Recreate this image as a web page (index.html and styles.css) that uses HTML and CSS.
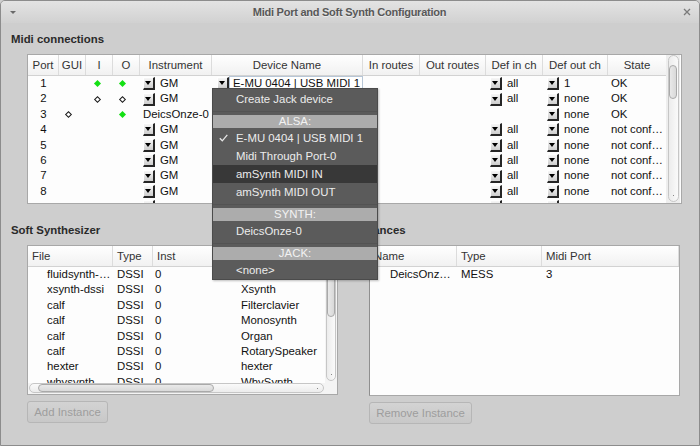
FILE: index.html
```html
<!DOCTYPE html>
<html>
<head>
<meta charset="utf-8">
<title>Midi Port and Soft Synth Configuration</title>
<link rel="stylesheet" href="styles.css">
</head>
<body>
<div class="window">
  <div class="titlebar">
    <span class="tb-menu"></span>
    <span class="tb-title">Midi Port and Soft Synth Configuration</span>
    <svg class="tb-close" width="8" height="8" viewBox="0 0 8 8"><path d="M1 1L7 7M7 1L1 7" stroke="#7a7a7a" stroke-width="1.3" fill="none"/></svg>
  </div>

  <div class="content">
    <div class="group-label">Midi connections</div>
    <div class="frame midi-frame">
      <div class="midi-table">
        <div class="mrow mhead">
          <div>Port</div><div>GUI</div><div>I</div><div>O</div><div>Instrument</div><div>Device Name</div><div>In routes</div><div>Out routes</div><div>Def in ch</div><div>Def out ch</div><div>State</div>
        </div>
        <div class="mrow">
          <div class="num">1</div><div class="ico"></div><div class="ico i"><i class="dg"></i></div><div class="ico"><i class="dg"></i></div>
          <div class="cb first"><i class="arr"></i>GM</div>
          <div class="dev"><i class="arr"></i><span class="edit">E-MU 0404 | USB MIDI 1</span></div>
          <div></div><div></div>
          <div class="cb"><i class="arr"></i>all</div><div class="cb"><i class="arr"></i>1</div><div class="st">OK</div>
        </div>
        <div class="mrow">
          <div class="num">2</div><div class="ico"></div><div class="ico i"><i class="dw"></i></div><div class="ico"><i class="dw"></i></div>
          <div class="cb first"><i class="arr"></i>GM</div>
          <div></div><div></div><div></div>
          <div class="cb"><i class="arr"></i>all</div><div class="cb"><i class="arr"></i>none</div><div class="st">OK</div>
        </div>
        <div class="mrow">
          <div class="num">3</div><div class="ico"><i class="dw"></i></div><div class="ico i"></div><div class="ico"><i class="dg"></i></div>
          <div class="cb first">DeicsOnze-0</div>
          <div></div><div></div><div></div>
          <div></div><div class="cb"><i class="arr"></i>none</div><div class="st">OK</div>
        </div>
        <div class="mrow">
          <div class="num">4</div><div></div><div></div><div></div>
          <div class="cb first"><i class="arr"></i>GM</div>
          <div></div><div></div><div></div>
          <div class="cb"><i class="arr"></i>all</div><div class="cb"><i class="arr"></i>none</div><div class="st">not conf…</div>
        </div>
        <div class="mrow">
          <div class="num">5</div><div></div><div></div><div></div>
          <div class="cb first"><i class="arr"></i>GM</div>
          <div></div><div></div><div></div>
          <div class="cb"><i class="arr"></i>all</div><div class="cb"><i class="arr"></i>none</div><div class="st">not conf…</div>
        </div>
        <div class="mrow">
          <div class="num">6</div><div></div><div></div><div></div>
          <div class="cb first"><i class="arr"></i>GM</div>
          <div></div><div></div><div></div>
          <div class="cb"><i class="arr"></i>all</div><div class="cb"><i class="arr"></i>none</div><div class="st">not conf…</div>
        </div>
        <div class="mrow">
          <div class="num">7</div><div></div><div></div><div></div>
          <div class="cb first"><i class="arr"></i>GM</div>
          <div></div><div></div><div></div>
          <div class="cb"><i class="arr"></i>all</div><div class="cb"><i class="arr"></i>none</div><div class="st">not conf…</div>
        </div>
        <div class="mrow">
          <div class="num">8</div><div></div><div></div><div></div>
          <div class="cb first"><i class="arr"></i>GM</div>
          <div></div><div></div><div></div>
          <div class="cb"><i class="arr"></i>all</div><div class="cb"><i class="arr"></i>none</div><div class="st">not conf…</div>
        </div>
        <div class="mrow">
          <div class="num"></div><div></div><div></div><div></div>
          <div class="cb first"><i class="arr"></i></div>
          <div></div><div></div><div></div>
          <div class="cb"><i class="arr"></i></div><div class="cb"><i class="arr"></i></div><div class="st"></div>
        </div>
      </div>
      <div class="midi-vs"><div class="vtrack"><div class="vthumb"></div><i class="dot"></i></div></div>
    </div>

    <div class="bottom">
      <div class="col">
        <div class="group-label">Soft Synthesizer</div>
        <div class="frame synth-frame">
          <div class="srow shead"><div>File</div><div>Type</div><div>Inst</div><div>Name</div></div>
          <div class="sbody">
            <div class="srows">
              <div class="srow"><div class="file">fluidsynth-…</div><div>DSSI</div><div>0</div><div>FluidSynth</div></div>
              <div class="srow"><div class="file">xsynth-dssi</div><div>DSSI</div><div>0</div><div>Xsynth</div></div>
              <div class="srow"><div class="file">calf</div><div>DSSI</div><div>0</div><div>Filterclavier</div></div>
              <div class="srow"><div class="file">calf</div><div>DSSI</div><div>0</div><div>Monosynth</div></div>
              <div class="srow"><div class="file">calf</div><div>DSSI</div><div>0</div><div>Organ</div></div>
              <div class="srow"><div class="file">calf</div><div>DSSI</div><div>0</div><div>RotarySpeaker</div></div>
              <div class="srow"><div class="file">hexter</div><div>DSSI</div><div>0</div><div>hexter</div></div>
              <div class="srow"><div class="file">whysynth</div><div>DSSI</div><div>0</div><div>WhySynth</div></div>
            </div>
            <div class="synth-vs"><div class="vtrack"><div class="vthumb s"></div><i class="dot"></i></div></div>
          </div>
          <div class="hrow">
            <div class="htrack"><div class="hthumb"></div><i class="hdot"></i></div>
            <div class="corner"></div>
          </div>
        </div>
        <button class="btn add" disabled>Add Instance</button>
      </div>

      <div class="col">
        <div class="group-label">Instances</div>
        <div class="frame inst-frame">
          <div class="irow ihead"><div>Name</div><div>Type</div><div>Midi Port</div></div>
          <div class="irow"><div class="iname">DeicsOnz…</div><div>MESS</div><div>3</div></div>
        </div>
        <button class="btn remove" disabled>Remove Instance</button>
      </div>
    </div>
  </div>

  <div class="popup">
    <div class="mi">Create Jack device</div>
    <div class="msep"></div>
    <div class="mh">ALSA:</div>
    <div class="mi checked"><svg class="check" width="9" height="8" viewBox="0 0 9 8"><path d="M0.8 4.2L3.3 6.8L8.3 0.8" stroke="#e6e6e6" stroke-width="1.3" fill="none"/></svg>E-MU 0404 | USB MIDI 1</div>
    <div class="mi">Midi Through Port-0</div>
    <div class="mi hl">amSynth MIDI IN</div>
    <div class="mi">amSynth MIDI OUT</div>
    <div class="msep"></div>
    <div class="mh">SYNTH:</div>
    <div class="mi">DeicsOnze-0</div>
    <div class="msep"></div>
    <div class="mh">JACK:</div>
    <div class="mi">&lt;none&gt;</div>
  </div>
</div>
</body>
</html>
```

FILE: styles.css
```css
* { box-sizing: border-box; }
html, body { margin: 0; padding: 0; }
body {
  width: 700px;
  height: 446px;
  overflow: hidden;
  background: #cecece;
  font-family: "Liberation Sans", Arial, sans-serif;
  font-size: 11.4px;
  color: #111;
}

.window {
  position: relative;
  width: 700px;
  height: 446px;
  background: #cecece;
  border: 1px solid #8c8c8c;
  border-radius: 5px 5px 0 0;
  overflow: hidden;
}

/* title bar */
.titlebar {
  height: 22px;
  display: flex;
  align-items: center;
  justify-content: space-between;
  padding: 0 8px 0 9px;
  background: linear-gradient(#e3e3e3, #d1d1d1);
}
.tb-menu {
  width: 0; height: 0;
  border-left: 3px solid transparent;
  border-right: 3px solid transparent;
  border-top: 3px solid #6a6a6a;
}
.tb-title {
  font-weight: bold;
  font-size: 11px;
  letter-spacing: -0.25px;
  color: #585858;
  text-shadow: 0 1px 0 rgba(255,255,255,0.5);
}
.tb-close { display: block; }

/* content */
.content {
  padding: 9px 17px 0 10px;
}
.group-label {
  height: 14px;
  line-height: 14px;
  font-weight: bold;
  font-size: 11.4px;
  color: #2a2a2a;
  margin-bottom: 8px;
  white-space: nowrap;
}
.frame {
  margin-left: 16px;
  background: #fdfdfd;
  border: 1px solid #a8a8a8;
  overflow: hidden;
}

/* midi table */
.midi-frame {
  display: flex;
  height: 150px;
}
.midi-table {
  width: 638px;
  flex: none;
  overflow: hidden;
}
.mrow {
  display: grid;
  grid-template-columns: 31px 27px 27px 27px 72px 151px 57px 66px 57px 65px 58px;
  height: 15.4px;
  line-height: 15.4px;
  white-space: nowrap;
}
.mrow > div { overflow: hidden; }
.mhead {
  height: 21px;
  line-height: 20px;
  background: linear-gradient(#ffffff, #f1f1f1);
  border-bottom: 1px solid #d2d2d2;
  color: #333;
}
.mhead > div {
  text-align: center;
  border-right: 1px solid #dcdcdc;
}
.mhead > div:last-child { border-right: none; }
.num { text-align: center; }
.ico {
  display: flex;
  align-items: center;
  padding-left: 7px;
}
.ico.i { padding-left: 9px; }
.dg, .dw {
  display: block;
  width: 5px;
  height: 5px;
  transform: rotate(45deg);
}
.dg { background: #14e014; }
.dw { background: #fff; border: 1px solid #1a1a1a; }

.cb {
  display: flex;
  align-items: center;
  gap: 5px;
  padding-left: 4px;
}
.cb.first { padding-left: 3px; }
.arr {
  position: relative;
  display: block;
  flex: none;
  width: 12px;
  height: 13px;
  background: linear-gradient(#f7f7f7, #cdcdcd);
  border-style: solid;
  border-width: 1px 2px 2px 1px;
  border-color: #ffffff #262626 #262626 #ffffff;
}
.arr::after {
  content: "";
  position: absolute;
  left: 1px;
  top: 3px;
  border-left: 3.5px solid transparent;
  border-right: 3.5px solid transparent;
  border-top: 4px solid #000;
}
.dev {
  display: flex;
  align-items: center;
  padding-left: 5px;
}
.edit {
  flex: 1;
  height: 15px;
  line-height: 13px;
  border: 1px solid #b7c6d6;
  background: #fff;
  padding-left: 3px;
  overflow: hidden;
}
.st {
  padding-left: 3px;
}

.midi-vs {
  width: 14px;
  flex: none;
  background: #eeeeee;
  padding: 0 1px 1px 2px;
}
.vtrack {
  position: relative;
  height: 100%;
  border: 1px solid #c6c6c6;
  border-radius: 6px;
  background: linear-gradient(90deg, #ececec, #fafafa);
}
.vthumb {
  position: absolute;
  left: 0;
  top: 9px;
  width: 8px;
  height: 34px;
  border: 1px solid #a9a9a9;
  border-radius: 4px;
  background: linear-gradient(90deg, #e9e9e9, #d9d9d9);
}
.dot {
  position: absolute;
  left: 4px;
  bottom: 5px;
  width: 1px;
  height: 1px;
  background: #888;
}

/* bottom area */
.bottom {
  display: flex;
  gap: 15px;
  margin-top: 19px;
}
.col { width: 328px; }
.col:first-child { width: 327px; }

.synth-frame {
  width: 311px;
  height: 150px;
  margin-bottom: 1px;
  display: flex;
  flex-direction: column;
}
.srow {
  display: grid;
  grid-template-columns: 85px 40px 84px 1fr;
  height: 15.4px;
  line-height: 15.4px;
  white-space: nowrap;
}
.srow > div { overflow: hidden; padding-left: 4px; }
.srow > div:nth-child(3) { padding-left: 2px; }
.srow > div.file { padding-left: 19px; }
.shead, .ihead {
  height: 21px;
  line-height: 20px;
  flex: none;
  background: linear-gradient(#ffffff, #f1f1f1);
  border-bottom: 1px solid #d2d2d2;
  color: #333;
}
.shead > div, .ihead > div { border-right: 1px solid #dcdcdc; padding-left: 4px; }
.shead > div:nth-child(3) { padding-left: 4px; }
.sbody {
  display: flex;
  flex: 1;
  min-height: 0;
}
.srows {
  width: 297px;
  flex: none;
  overflow: hidden;
}
.synth-vs {
  width: 12px;
  flex: none;
  padding: 0 1px 2px 1px;
  background: #f4f4f4;
}
.vthumb.s { top: 1px; height: 48px; width: 8px; }
.hrow {
  height: 11px;
  flex: none;
  display: flex;
  background: #f4f4f4;
}
.htrack {
  position: relative;
  width: 295px;
  margin-left: 1px;
  height: 10px;
  border: 1px solid #c6c6c6;
  border-radius: 6px;
  background: linear-gradient(#fafafa, #ececec);
}
.hthumb {
  position: absolute;
  left: 8px;
  top: 0;
  width: 176px;
  height: 8px;
  border: 1px solid #a9a9a9;
  border-radius: 4px;
  background: linear-gradient(#e9e9e9, #d9d9d9);
}
.hdot {
  position: absolute;
  right: 5px;
  top: 4px;
  width: 1px;
  height: 1px;
  background: #888;
}
.corner { flex: 1; }

.inst-frame {
  width: 311px;
  height: 151px;
  border-left-color: #8f8f8f;
}
.irow {
  display: grid;
  grid-template-columns: 87px 85px 1fr;
  height: 15.4px;
  line-height: 15.4px;
  white-space: nowrap;
}
.irow > div { overflow: hidden; padding-left: 4px; }
.irow > div.iname { padding-left: 20px; }
.ihead { height: 21px; line-height: 20px; }

.btn {
  display: block;
  margin: 6px 0 0 16px;
  height: 22px;
  padding: 0;
  border: 1px solid #b6b6b6;
  border-radius: 3px;
  background: linear-gradient(#d3d3d3, #c8c8c8);
  color: #9d9d9d;
  font-family: "Liberation Sans", Arial, sans-serif;
  font-size: 11.4px;
  text-align: center;
}
.btn.add { width: 81px; }
.btn.remove { width: 103px; }

/* popup menu */
.popup {
  position: absolute;
  left: 211px;
  top: 87px;
  width: 166px;
  padding-top: 1px;
  background: #5b5b5b;
  border: 1px solid #4b4b4b;
  color: #ececec;
  box-shadow: 1px 1px 2px rgba(0,0,0,0.25);
}
.mi {
  position: relative;
  height: 18px;
  line-height: 18px;
  padding-left: 23px;
  white-space: nowrap;
}
.mi.hl { background: #383838; }
.check {
  position: absolute;
  left: 6px;
  top: 5px;
}
.msep {
  position: relative;
  height: 7px;
}
.msep::before {
  content: "";
  position: absolute;
  left: 0; right: 0;
  top: 3px;
  height: 1px;
  background: #535353;
}
.mh {
  height: 13px;
  line-height: 13px;
  margin-bottom: 1px;
  text-align: center;
  background: #acacac;
  color: #f2f2f2;
}
```
